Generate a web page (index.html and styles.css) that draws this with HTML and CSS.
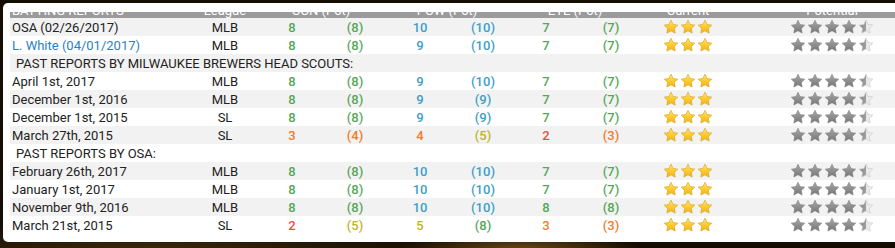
FILE: index.html
```html
<!DOCTYPE html>
<html lang="en">

<head>
    <meta charset="UTF-8">
    <title>Batting Reports</title>
    <link rel="stylesheet" href="styles.css">
</head>

<body>
    <svg class="defs" width="0" height="0">
        <defs>
            <linearGradient id="gold" x1="0" y1="0" x2="0" y2="1">
                <stop offset="0" stop-color="#ffe680" />
                <stop offset="0.55" stop-color="#fcc92c" />
                <stop offset="1" stop-color="#f2b01a" />
            </linearGradient>
            <linearGradient id="grey" x1="0" y1="0" x2="0" y2="1">
                <stop offset="0" stop-color="#a8a8a8" />
                <stop offset="1" stop-color="#767676" />
            </linearGradient>
            <linearGradient id="half" x1="0" y1="0" x2="1" y2="0">
                <stop offset="0" stop-color="#8a8a8a" />
                <stop offset="0.5" stop-color="#a0a0a0" />
                <stop offset="0.5" stop-color="#e6e6e6" />
                <stop offset="1" stop-color="#f4f4f4" />
            </linearGradient>
            <path id="star" d="M12 1.8l3.1 6.4 7 1-5.05 4.9 1.2 7L12 17.8l-6.25 3.3 1.2-7L1.9 9.2l7-1z" />
        </defs>
    </svg>

    <div class="panel">
        <div class="scroller">
            <table class="reports">
                <colgroup>
                    <col class="c-name">
                    <col class="c-league">
                    <col class="c-a">
                    <col class="c-b">
                    <col class="c-c">
                    <col class="c-d">
                    <col class="c-e">
                    <col class="c-f">
                    <col class="c-cur">
                    <col class="c-pot">
                </colgroup>
                <thead>
                    <tr>
                        <th class="left">BATTING REPORTS</th>
                        <th>League</th>
                        <th colspan="2">CON (Pot)</th>
                        <th colspan="2">POW (Pot)</th>
                        <th colspan="2">EYE (Pot)</th>
                        <th>Current</th>
                        <th>Potential</th>
                    </tr>
                </thead>
                <tbody id="rows"></tbody>
            </table>
        </div>
    </div>

    <script>
        var rows = [
            ['OSA (02/26/2017)', 'MLB', 8, 8, 10, 10, 7, 7],
            ['L. White (04/01/2017)', 'MLB', 8, 8, 9, 10, 7, 7, 'link'],
            ['PAST REPORTS BY MILWAUKEE BREWERS HEAD SCOUTS:'],
            ['April 1st, 2017', 'MLB', 8, 8, 9, 10, 7, 7],
            ['December 1st, 2016', 'MLB', 8, 8, 9, 9, 7, 7],
            ['December 1st, 2015', 'SL', 8, 8, 9, 9, 7, 7],
            ['March 27th, 2015', 'SL', 3, 4, 4, 5, 2, 3],
            ['PAST REPORTS BY OSA:'],
            ['February 26th, 2017', 'MLB', 8, 8, 10, 10, 7, 7],
            ['January 1st, 2017', 'MLB', 8, 8, 10, 10, 7, 7],
            ['November 9th, 2016', 'MLB', 8, 8, 10, 10, 8, 8],
            ['March 21st, 2015', 'SL', 2, 5, 5, 8, 3, 3]
        ];

        function grade(n) {
            if (n <= 2) return 'r-red';
            if (n <= 4) return 'r-orange';
            if (n <= 6) return 'r-yellow';
            if (n <= 8) return 'r-green';
            return 'r-blue';
        }

        function star(fill) {
            return '<svg class="star ' + fill + '" viewBox="0 0 24 24"><use href="#star" fill="url(#' + fill + ')"/></svg>';
        }

        var current = star('gold') + star('gold') + star('gold');
        var potential = star('grey') + star('grey') + star('grey') + star('grey') + star('half');

        var html = '';
        rows.forEach(function (r) {
            if (r.length === 1) {
                html += '<tr class="section"><td colspan="10">' + r[0] + '</td></tr>';
                return;
            }
            var name = r[8] === 'link' ? '<a href="#">' + r[0] + '</a>' : r[0];
            html += '<tr><td class="left">' + name + '</td><td>' + r[1] + '</td>';
            for (var i = 2; i < 8; i++) {
                var txt = i % 2 === 0 ? r[i] : '(' + r[i] + ')';
                html += '<td class="num ' + grade(r[i]) + '">' + txt + '</td>';
            }
            html += '<td><div class="stars">' + current + '</div></td>';
            html += '<td><div class="stars">' + potential + '</div></td></tr>';
        });
        document.getElementById('rows').innerHTML = html;
    </script>
</body>

</html>
```

FILE: styles.css
```css
body {
    margin: 0;
    overflow: hidden;
    font-family: Roboto, "Liberation Sans", Arial, sans-serif;
    font-size: 13px;
    color: #222;
    background: #140d04;
    background-image: radial-gradient(ellipse 120px 20px at 520px 250px, #6a4a14, transparent),
        radial-gradient(ellipse 300px 30px at 150px 250px, #3a2a0c, transparent);
    height: 248px;
}

.defs {
    display: block;
    width: 0;
    height: 0;
}

.panel {
    width: 940px;
    margin: 3px 0 0 3px;
    padding: 9px 0 8px 7px;
    background: #fff;
    border-radius: 5px;
}

.scroller {
    overflow: hidden;
}

.reports {
    table-layout: fixed;
    width: 918px;
    border-collapse: collapse;
    margin-top: -9px;
}

.c-name { width: 182px; }
.c-league { width: 66px; }
.c-a { width: 68px; }
.c-b { width: 58px; }
.c-c { width: 72px; }
.c-d { width: 54px; }
.c-e { width: 72px; }
.c-f { width: 58px; }
.c-cur { width: 96px; }
.c-pot { width: 192px; }

.reports th {
    height: 15px;
    padding: 0;
    line-height: 15px;
    vertical-align: bottom;
    background: #9b9b9b;
    color: #fff;
    font-weight: normal;
    text-align: center;
    white-space: nowrap;
}

.reports td {
    height: 18px;
    padding: 0;
    text-align: center;
    white-space: nowrap;
}

.reports tbody tr:nth-child(odd) {
    background: #f2f2f2;
}

.reports .left {
    text-align: left;
    padding-left: 2px;
}

.reports .section td {
    text-align: left;
    padding-left: 6px;
}

.reports a {
    color: #2d7fc1;
    text-decoration: none;
}

.num {
    font-weight: 500;
}

.r-green { color: #55a758; }
.r-blue { color: #3f9ec6; }
.r-orange { color: #f07c2c; }
.r-yellow { color: #c2b22a; }
.r-red { color: #e0553a; }

.stars {
    display: flex;
    justify-content: center;
    gap: 1px;
}

.star {
    width: 16px;
    height: 16px;
}

.star.gold use { stroke: #d8a318; stroke-width: 1; }
.star.grey use { stroke: #7a7a7a; stroke-width: 0.8; }
.star.half use { stroke: #bcbcbc; stroke-width: 0.8; }
```
